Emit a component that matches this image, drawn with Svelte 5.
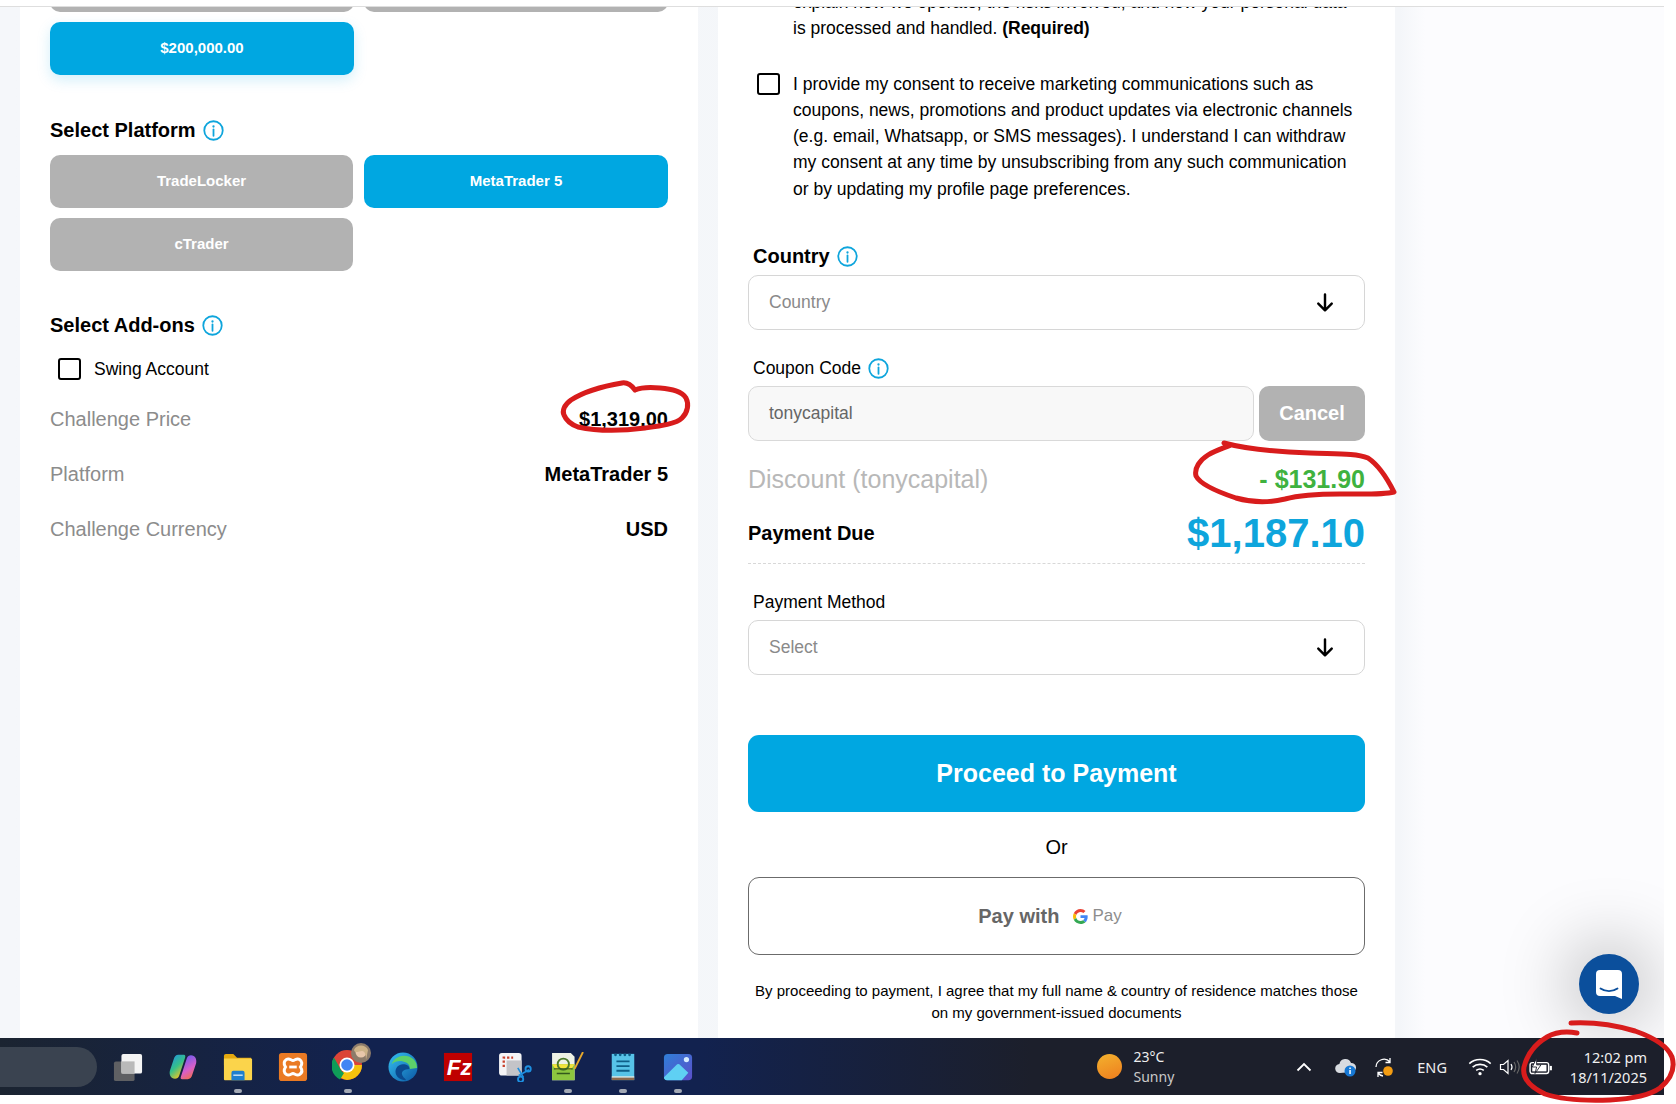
<script>
  const sizes = ['$100,000.00', '$150,000.00'];
  const platforms = [
    { name: 'TradeLocker', on: false },
    { name: 'MetaTrader 5', on: true },
    { name: 'cTrader', on: false }
  ];
  const summary = [
    ['Challenge Price', '$1,319.00'],
    ['Platform', 'MetaTrader 5'],
    ['Challenge Currency', 'USD']
  ];
</script>

{#snippet info()}
  <svg class="info" viewBox="0 0 20 20" aria-hidden="true">
    <circle cx="10" cy="10" r="8.8" fill="none" stroke="#0ea5dc" stroke-width="1.7" />
    <circle cx="10" cy="6.2" r="1.1" fill="#0ea5dc" />
    <path d="M10 9v6" stroke="#0ea5dc" stroke-width="1.7" stroke-linecap="round" />
  </svg>
{/snippet}

{#snippet arrow()}
  <svg class="arrow" viewBox="0 0 18 18" aria-hidden="true">
    <path d="M9 2v13M3.500 9.500 9 15l5.500-5.500" fill="none" stroke="#000" stroke-width="2" stroke-linecap="round" stroke-linejoin="round" />
  </svg>
{/snippet}

<div class="page">
  <div class="screen">
    <div class="topbar"></div>
    <main class="main">
      <div class="columns">
        <section class="card left">
          <div class="grid">
            {#each sizes as s}
              <div class="opt">{s}</div>
            {/each}
            <div class="opt on glow">$200,000.00</div>
          </div>

          <h3 class="heading h-platform">Select Platform {@render info()}</h3>
          <div class="grid grid-platform">
            {#each platforms as p}
              <div class="opt" class:on={p.on}>{p.name}</div>
            {/each}
          </div>

          <h3 class="heading h-addons">Select Add-ons {@render info()}</h3>
          <label class="addon"><span class="box"></span><span>Swing Account</span></label>

          <div class="summary">
            {#each summary as [k, v]}
              <div class="sumrow"><span class="k">{k}</span><strong>{v}</strong></div>
            {/each}
          </div>
        </section>

        <section class="card right">
          <div class="consent">
            <span class="box hidden"></span>
            <p>explain how we operate, the risks involved, and how your personal data is processed and handled. <b>(Required)</b></p>
          </div>
          <div class="consent second">
            <span class="box"></span>
            <p>I provide my consent to receive marketing communications such as coupons, news, promotions and product updates via electronic channels (e.g. email, Whatsapp, or SMS messages). I understand I can withdraw my consent at any time by unsubscribing from any such communication or by updating my profile page preferences.</p>
          </div>

          <h3 class="flabel bold l-country">Country {@render info()}</h3>
          <div class="select s-country">Country {@render arrow()}</div>

          <div class="flabel l-coupon">Coupon Code {@render info()}</div>
          <div class="coupon">
            <div class="cinput">tonycapital</div>
            <div class="cancel">Cancel</div>
          </div>

          <div class="discount"><span>Discount (tonycapital)</span><strong>- $131.90</strong></div>
          <div class="due"><strong>Payment Due</strong><b class="amount">$1,187.10</b></div>

          <div class="flabel l-method">Payment Method</div>
          <div class="select">Select {@render arrow()}</div>

          <div class="proceed">Proceed to Payment</div>
          <div class="or">Or</div>
          <div class="gpay">
            <b>Pay with</b>
            <svg class="g" viewBox="0 0 48 48" aria-hidden="true">
              <path fill="#EA4335" d="M24 9.500c3.540 0 6.710 1.220 9.210 3.600l6.850-6.850C35.900 2.380 30.470 0 24 0 14.620 0 6.510 5.380 2.560 13.220l7.980 6.190C12.430 13.720 17.740 9.500 24 9.500z" />
              <path fill="#4285F4" d="M46.980 24.550c0-1.570-.15-3.090-.38-4.550H24v9.020h12.940c-.58 2.960-2.260 5.480-4.780 7.180l7.730 6c4.510-4.180 7.090-10.360 7.090-17.650z" />
              <path fill="#FBBC05" d="M10.530 28.590c-.48-1.450-.76-2.990-.76-4.590s.27-3.140.76-4.590l-7.980-6.190C.92 16.460 0 20.120 0 24c0 3.880.92 7.540 2.560 10.780l7.970-6.190z" />
              <path fill="#34A853" d="M24 48c6.480 0 11.930-2.130 15.890-5.810l-7.730-6c-2.150 1.450-4.920 2.300-8.160 2.300-6.260 0-11.570-4.220-13.470-9.910l-7.980 6.190C6.510 42.620 14.620 48 24 48z" />
            </svg>
            <span class="paytxt">Pay</span>
          </div>
          <p class="legal">By proceeding to payment, I agree that my full name &amp; country of residence matches those<br />on my government-issued documents</p>
        </section>
      </div>

      <div class="chat">
        <svg viewBox="0 0 26 29" width="26" height="29" aria-hidden="true">
          <path d="M4 0h18a4 4 0 0 1 4 4v25l-7-3H4a4 4 0 0 1-4-4V4a4 4 0 0 1 4-4z" fill="#fff" />
          <path d="M4.500 18.500c5 3.500 12 3.500 17 0" fill="none" stroke="#0b4f9c" stroke-width="1.800" stroke-linecap="round" />
        </svg>
      </div>
    </main>

    <footer class="taskbar">
      <div class="search"></div>
      <div class="apps">
        <span class="app"><svg viewBox="0 0 32 32"><rect x="1" y="10" width="22" height="21" rx="2" fill="#5f6063" /><rect x="9" y="2" width="22" height="21" rx="2" fill="#f4f4f4" /><rect x="9" y="10" width="14" height="13" fill="#b9b9b9" /></svg></span>
        <span class="app"><svg viewBox="0 0 32 32"><defs><linearGradient id="cp1" x1="0" y1="0" x2="0.6" y2="1"><stop offset="0" stop-color="#1f8fe8" /><stop offset=".55" stop-color="#35c08a" /><stop offset="1" stop-color="#f5c51f" /></linearGradient><linearGradient id="cp2" x1="0.4" y1="0" x2="0.8" y2="1"><stop offset="0" stop-color="#6e5cf0" /><stop offset=".55" stop-color="#d95fc8" /><stop offset="1" stop-color="#f5703c" /></linearGradient></defs><path d="M11 3h6c1.500 0 1.800 1.500 1.200 3L12 25c-.8 2.500-2.500 3.500-4.500 3.500C3 28.500 1 24 2 20L6 8c.8-3 2.500-5 5-5z" fill="url(#cp1)" /><path d="M21 29h-6c-1.500 0-1.800-1.500-1.200-3L20 7c.8-2.500 2.500-3.500 4.500-3.500C29 3.500 31 8 30 12l-4 12c-.8 3-2.500 5-5 5z" fill="url(#cp2)" /></svg></span>
        <span class="app dot"><svg viewBox="0 0 32 32"><path d="M1 4a2 2 0 0 1 2-2h8l4 4h15v8H1z" fill="#e5a90f" /><path d="M1 7h29a1 1 0 0 1 1 1v21a1 1 0 0 1-1 1H2a1 1 0 0 1-1-1z" fill="#fbd44b" /><path d="M9 22a2 2 0 0 1 2-2h10a2 2 0 0 1 2 2v8H9z" fill="#1f7fcf" /><rect x="11" y="24" width="10" height="1.500" fill="#cfe6f8" /></svg></span>
        <span class="app"><svg viewBox="0 0 32 32"><rect x="1" y="1" width="30" height="30" rx="3" fill="#ea7a23" /><path d="M9 8c3-2 5 1 7 1s4-3 7-1 3 5 1 8c2 3 2 6-1 8s-5-1-7-1-4 3-7 1-3-5-1-8c-2-3-2-6 1-8z" fill="none" stroke="#fff" stroke-width="3.200" /><path d="M12 16h8" stroke="#fff" stroke-width="3" /></svg></span>
        <span class="app dot"><svg class="over" viewBox="0 0 40 40"><circle cx="15" cy="23" r="15" fill="#db4437" /><path d="M15 38a15 15 0 0 0 15-15H15l-7 12a15 15 0 0 0 7 3z" fill="#f4c20d" /><path d="M2 15.500 9 28a8 8 0 0 0 3 3l-4 6.500A15 15 0 0 1 2 15.500z" fill="#0f9d58" /><circle cx="15" cy="23" r="7.500" fill="#fff" /><circle cx="15" cy="23" r="5.800" fill="#4285f4" /><circle cx="29" cy="11" r="10" fill="#8c7b6a" /><circle cx="29" cy="10" r="5.500" fill="#e8c7aa" /><path d="M22 8c2-6 12-6 14 0l-2 10c0-5-1-9-4-9s-7 3-8-1z" fill="#cdb388" /></svg></span>
        <span class="app"><svg viewBox="0 0 32 32"><defs><linearGradient id="ed" x1="0" y1="0" x2="1" y2="1"><stop offset="0" stop-color="#35c1f1" /><stop offset="1" stop-color="#0b57a4" /></linearGradient></defs><circle cx="16" cy="16" r="15.500" fill="url(#ed)" /><path d="M31 17c0-8-6-13-14-13C10 4 5 9 4 13c3-3 8-4 12-3 5 1 8 4 7 8l8-1z" fill="#5dd06a" /><path d="M23 18c0-3-3-5-7-5-5 0-8 4-8 8 0 5 5 9 11 9 1-1-3-2-4-6-1-3 2-6 8-6z" fill="#0b4a8f" /></svg></span>
        <span class="app"><svg viewBox="0 0 32 32"><rect x="1" y="1" width="30" height="30" fill="#bf0000" /><text class="fz" x="4" y="25">Fz</text></svg></span>
        <span class="app"><svg class="over2" viewBox="0 0 36 32"><rect x="1" y="1" width="24" height="24" rx="3" fill="#f4f4f6" /><path d="M6 16V6h10" fill="none" stroke="#c8412c" stroke-width="2.500" stroke-dasharray="2.500 2" /><rect x="9" y="9" width="16" height="16" fill="#c4c4c8" /><path d="M21 17l6 10M33 19l-11 6" stroke="#1d8fe0" stroke-width="1.800" /><circle cx="32" cy="18" r="2.800" fill="none" stroke="#1d8fe0" stroke-width="2" /><circle cx="24" cy="29" r="2.800" fill="none" stroke="#1d8fe0" stroke-width="2" /></svg></span>
        <span class="app dot"><svg class="over2 npp" viewBox="0 0 36 32"><path d="M1 1h20l4 4v25H1z" fill="#eef2e6" /><rect x="1" y="13" width="24" height="17" fill="#8cc63f" /><path d="M1 13h24l-4 6H5z" fill="#f3e33b" /><circle cx="13" cy="13" r="6" fill="none" stroke="#4c7a2a" stroke-width="2" /><path d="M3 18h20M6 23h14" stroke="#33581c" stroke-width="1.500" /><path d="M34 0 25 18" stroke="#e8a92b" stroke-width="2" /></svg></span>
        <span class="app dot"><svg viewBox="0 0 32 32"><rect x="4" y="2" width="24" height="28" fill="#57c3e8" /><rect x="4" y="27" width="24" height="3" fill="#8d6a4f" /><rect x="4" y="26" width="24" height="1.200" fill="#f3ede4" /><path d="M9 10h14M9 15h14M9 20h14" stroke="#0f5f88" stroke-width="2" /><path d="M8 3h.01M13 3h.01M18 3h.01M23 3h.01" stroke="#0f5f88" stroke-width="3" stroke-linecap="round" /></svg></span>
        <span class="app dot"><svg viewBox="0 0 32 32"><defs><linearGradient id="ph" x1="0" y1="0" x2="1" y2="1"><stop offset="0" stop-color="#2f7fd8" /><stop offset="1" stop-color="#5b4fc9" /></linearGradient></defs><rect x="1" y="2" width="30" height="28" rx="4" fill="url(#ph)" /><circle cx="25" cy="8" r="2.800" fill="#d5ecff" /><path d="M1 27 14 14c1.500-1.500 3-1.500 4.500 0L27 22 20 30H4a3 3 0 0 1-3-3z" fill="#5fd0f3" /></svg></span>
      </div>

      <div class="weather">
        <span class="sun"></span>
        <div class="wtext"><span class="wtemp">23°C</span><span>Sunny</span></div>
      </div>
      <svg class="tray caret" viewBox="0 0 16 10"><path d="M1.500 8.500 8 2l6.500 6.500" fill="none" stroke="#fff" stroke-width="1.800" /></svg>
      <svg class="tray cloud" viewBox="0 0 22 20"><path d="M5 16a4.500 4.500 0 0 1-.6-9A6 6 0 0 1 16 6a4.500 4.500 0 0 1 1 9z" fill="#d8dbe0" /><circle cx="15" cy="14" r="5.500" fill="#1778d4" /><rect x="14.300" y="13" width="1.500" height="4" fill="#fff" /><rect x="14.300" y="10.500" width="1.500" height="1.500" fill="#fff" /></svg>
      <svg class="tray sync" viewBox="0 0 22 22"><path d="M3 11a8 8 0 0 1 14-5M17 2v4.500h-4.500M5 17a8 8 0 0 0 5 3M5 21v-4.500h4.500" fill="none" stroke="#fff" stroke-width="1.300" /><circle cx="15" cy="15" r="4.800" fill="#f39c12" /></svg>
      <span class="eng">ENG</span>
      <svg class="tray wifi" viewBox="0 0 20 16"><path d="M1 5.500c5-4.500 13-4.500 18 0M3.800 8.500c3.500-3 9-3 12.400 0M6.800 11.300c2-1.500 4.400-1.500 6.400 0" fill="none" stroke="#fff" stroke-width="1.400" /><circle cx="10" cy="14" r="1.400" fill="#fff" /></svg>
      <svg class="tray vol" viewBox="0 0 22 16"><path d="M1.500 5.500h3L9 1.500v13l-4.500-4h-3z" fill="none" stroke="#fff" stroke-width="1.200" /><path d="M12 5c1.200 1.800 1.200 4.200 0 6" fill="none" stroke="#fff" stroke-width="1.200" /><path d="M15 3c2 3 2 7 0 10M18 1.500c2.700 4 2.700 9 0 13" fill="none" stroke="#666" stroke-width="1.200" /></svg>
      <svg class="tray batt" viewBox="0 0 22 16"><rect x="1" y="4" width="17" height="10" rx="2" fill="none" stroke="#fff" stroke-width="1.300" /><rect x="3" y="6" width="13" height="6" fill="#fff" /><rect x="19" y="7" width="2" height="4" fill="#fff" /><path d="M7 0 3 8h4l-1.500 6L11 6H7z" fill="#fff" stroke="#1c1f2b" stroke-width=".8" /></svg>
      <div class="clock"><span>12:02 pm</span><span>18/11/2025</span></div>
    </footer>
  </div>

  <svg class="ink" viewBox="0 0 1676 1104" aria-hidden="true">
    <path d="M635 390C632 386 628 382 622 383C604 386 585 391 571 400C564 405 562 411 564 415C566 420 570 424 578 427C596 431 622 431 645 428C660 426 676 424 682 418C688 412 689 404 686 398C682 391 672 389 660 388C650 387 642 387 635 390" />
    <path d="M1224 443C1250 450 1280 452 1310 453C1335 454 1356 453 1368 458C1380 466 1388 480 1394 492C1382 495 1360 494 1340 494C1320 494 1300 495 1285 499C1268 503 1250 502 1236 498C1218 492 1200 484 1196 476C1194 468 1200 460 1208 455C1216 450 1224 448 1231 445" />
    <path d="M1577 1033C1565 1031 1554 1033 1547 1037C1535 1044 1527 1055 1524 1067C1522 1078 1530 1087 1545 1094C1560 1099 1585 1101 1610 1100C1630 1099 1650 1095 1660 1088C1672 1078 1675 1067 1672 1057C1668 1047 1655 1038 1635 1031C1615 1025 1590 1022 1571 1023" />
  </svg>
</div>

<style>
  :global(body) { margin: 0; background: #fff; }
  .page {
    position: relative;
    width: 1676px;
    height: 1104px;
    overflow: hidden;
    background: #fff;
    font-family: "Liberation Sans", Arial, sans-serif;
    color: #000;
  }
  .screen { width: 1664px; height: 1095px; display: flex; flex-direction: column; }
  .topbar { height: 6px; background: #fff; border-bottom: 1px solid #dedede; flex: none; position: relative; z-index: 2; }
  .main {
    position: relative;
    height: 1031px;
    flex: none;
    overflow: hidden;
    background: linear-gradient(90deg, #f5f7fa 0, #f4f6f9 1400px, #fcfcfe 1425px);
  }
  .columns { display: flex; gap: 20px; padding-left: 20px; margin-top: -48px; height: 1079px; }
  .card { background: #fff; box-sizing: border-box; padding: 0 30px; }
  .left { width: 678px; }
  .right { width: 677px; padding-top: 30px; }

  .grid { display: grid; grid-template-columns: 304px 304px; gap: 10px; grid-auto-rows: 53px; }
  .opt {
    display: flex; align-items: center; justify-content: center; box-sizing: border-box; padding-bottom: 2px;
    background: #b2b2b2; color: #fff; font-size: 15px; font-weight: 700; border-radius: 10px;
  }
  .opt.on { background: #00a7e1; }
  .opt.glow { box-shadow: 0 5px 14px rgba(0, 167, 225, .18); }
  .heading { margin: 0; font-size: 20px; line-height: 24px; font-weight: 700; display: flex; align-items: center; gap: 7px; }
  .h-platform { margin-top: 43px; }
  .grid-platform { margin-top: 13px; grid-template-columns: 303px 304px; column-gap: 11px; }
  .h-addons { margin-top: 42px; }
  .info { width: 21px; height: 21px; flex: none; }

  .addon { display: flex; align-items: center; gap: 13px; margin: 21px 0 0 8px; font-size: 17.500px; height: 22px; }
  .box { display: block; width: 23px; height: 22px; box-sizing: border-box; border: 2.500px solid #000; border-radius: 3px; flex: none; }
  .box.hidden { visibility: hidden; }

  .summary { margin-top: 12px; }
  .sumrow { height: 55px; display: flex; align-items: center; justify-content: space-between; font-size: 20px; }
  .k { color: #8c8c8c; }

  .consent { display: flex; gap: 13px; padding-left: 9px; }
  .consent p { margin: 0; font-size: 17.500px; line-height: 26.300px; max-width: 565px; }
  .consent .box { margin-top: 2px; }
  .second { margin-top: 29px; }

  .flabel { margin: 0 0 0 5px; font-size: 17.500px; line-height: 24px; font-weight: 400; display: flex; align-items: center; gap: 7px; }
  .flabel.bold { font-size: 20px; font-weight: 700; }
  .l-country { margin-top: 42px; }
  .l-coupon { margin-top: 26px; }
  .l-method { margin-top: 26px; }

  .select {
    box-sizing: border-box; height: 55px; margin-top: 6px; padding: 0 28px 0 20px;
    border: 1px solid #d6d6d6; border-radius: 10px;
    display: flex; align-items: center; justify-content: space-between;
    font-size: 17.500px; color: #8a8a8a;
  }
  .s-country { margin-top: 7px; }
  .arrow { width: 22px; height: 22px; }

  .coupon { display: flex; gap: 5px; margin-top: 6px; height: 55px; }
  .cinput {
    flex: 1; box-sizing: border-box; border: 1px solid #d9d9d9; border-radius: 10px; background: #f8f8f8;
    display: flex; align-items: center; padding-left: 20px; font-size: 17.500px; color: #666;
  }
  .cancel {
    width: 106px; border-radius: 10px; background: #b2b2b2; color: #fff; font-size: 20px; font-weight: 700;
    display: flex; align-items: center; justify-content: center;
  }

  .discount { margin-top: 24px; display: flex; justify-content: space-between; align-items: center; height: 28px; font-size: 25px; }
  .discount span { color: #b8b8b8; }
  .discount strong { color: #3fb23f; }
  .due {
    margin-top: 17px; height: 54px; box-sizing: border-box; padding-bottom: 7px;
    display: flex; justify-content: space-between; align-items: center;
    border-bottom: 1px dashed #d8d8d8; font-size: 20px;
  }
  .amount { font-size: 40px; color: #0ea5dc; }

  .proceed {
    margin-top: 60px; height: 77px; border-radius: 11px; background: #00a7e1; color: #fff;
    font-size: 25px; font-weight: 700; display: flex; align-items: center; justify-content: center;
  }
  .or { margin-top: 23px; text-align: center; font-size: 20px; line-height: 24px; }
  .gpay {
    margin-top: 18px; height: 78px; box-sizing: border-box; border: 1px solid #6b6b6b; border-radius: 11px;
    display: flex; align-items: center; justify-content: center; padding-right: 13px; color: #666; font-size: 20px;
  }
  .g { width: 15px; height: 15px; margin-left: 14px; }
  .paytxt { font-size: 17px; color: #8d8d8d; margin-left: 4px; }
  .legal { margin: 25px 0 0; text-align: center; font-size: 15px; line-height: 22px; }

  .chat {
    position: absolute; left: 1579px; top: 947px; width: 60px; height: 60px; border-radius: 50%;
    background: #0b4f9c; display: flex; align-items: center; justify-content: center;
    box-shadow: 0 0 70px 10px rgba(0, 0, 0, .28);
  }

  .taskbar {
    height: 57px; flex: none; display: flex; align-items: center; position: relative; z-index: 1;
    background: linear-gradient(90deg, #1b2431 0, #12224f 22%, #12224f 42%, #1c1f2b 62%, #1c1f2b 100%);
    color: #e9e9e9; font-family: "Noto Sans", "Open Sans", sans-serif; font-size: 14px;
  }
  .search { width: 97px; height: 40px; margin-top: 1px; border-radius: 0 20px 20px 0; background: #3a4350; flex: none; }
  .apps { display: flex; margin-left: 3.500px; flex: none; }
  .app { position: relative; width: 55px; height: 57px; display: flex; align-items: center; justify-content: center; }
  .app svg { width: 30px; height: 30px; }
  .app svg.over { width: 40px; height: 40px; margin-top: -9px; margin-left: 8px; }
  .app svg.over2 { width: 34px; height: 30px; margin-left: 3px; }
  .app svg.npp { margin-left: 0; }
  .dot::after {
    content: ""; position: absolute; bottom: 2px; left: 50%; width: 8px; height: 4px; margin-left: -4px;
    border-radius: 2px; background: #a3a9b5;
  }
  .fz { font-family: "Liberation Sans", sans-serif; font-size: 24px; font-weight: 700; font-style: italic; fill: #fff; }

  .weather { display: flex; align-items: center; gap: 12px; margin-left: 391px; flex: none; }
  .sun { width: 25px; height: 25px; border-radius: 50%; background: linear-gradient(160deg, #f3b22e, #ee7d1e); }
  .wtext { display: flex; flex-direction: column; line-height: 20px; color: #c9c9c9; }
  .wtemp { color: #eee; }
  .tray { flex: none; }
  .caret { width: 16px; height: 10px; margin-left: 122px; }
  .cloud { width: 22px; height: 20px; margin-left: 23px; }
  .sync { width: 22px; height: 22px; margin-left: 16px; }
  .eng { margin-left: 22px; width: 32px; color: #eee; font-size: 14.500px; }
  .wifi { width: 24px; height: 19px; margin-left: 19px; }
  .vol { width: 22px; height: 16px; margin-left: 7px; }
  .batt { width: 24px; height: 18px; margin-left: 8px; }
  .clock { margin-left: auto; padding-right: 17px; display: flex; flex-direction: column; align-items: flex-end; line-height: 20px; font-size: 14.500px; color: #f0f0f0; }

  .ink { position: absolute; left: 0; top: 0; width: 1676px; height: 1104px; pointer-events: none; z-index: 5; }
  .ink path { fill: none; stroke: #d81c1c; stroke-width: 5; stroke-linecap: round; stroke-linejoin: round; }
</style>
